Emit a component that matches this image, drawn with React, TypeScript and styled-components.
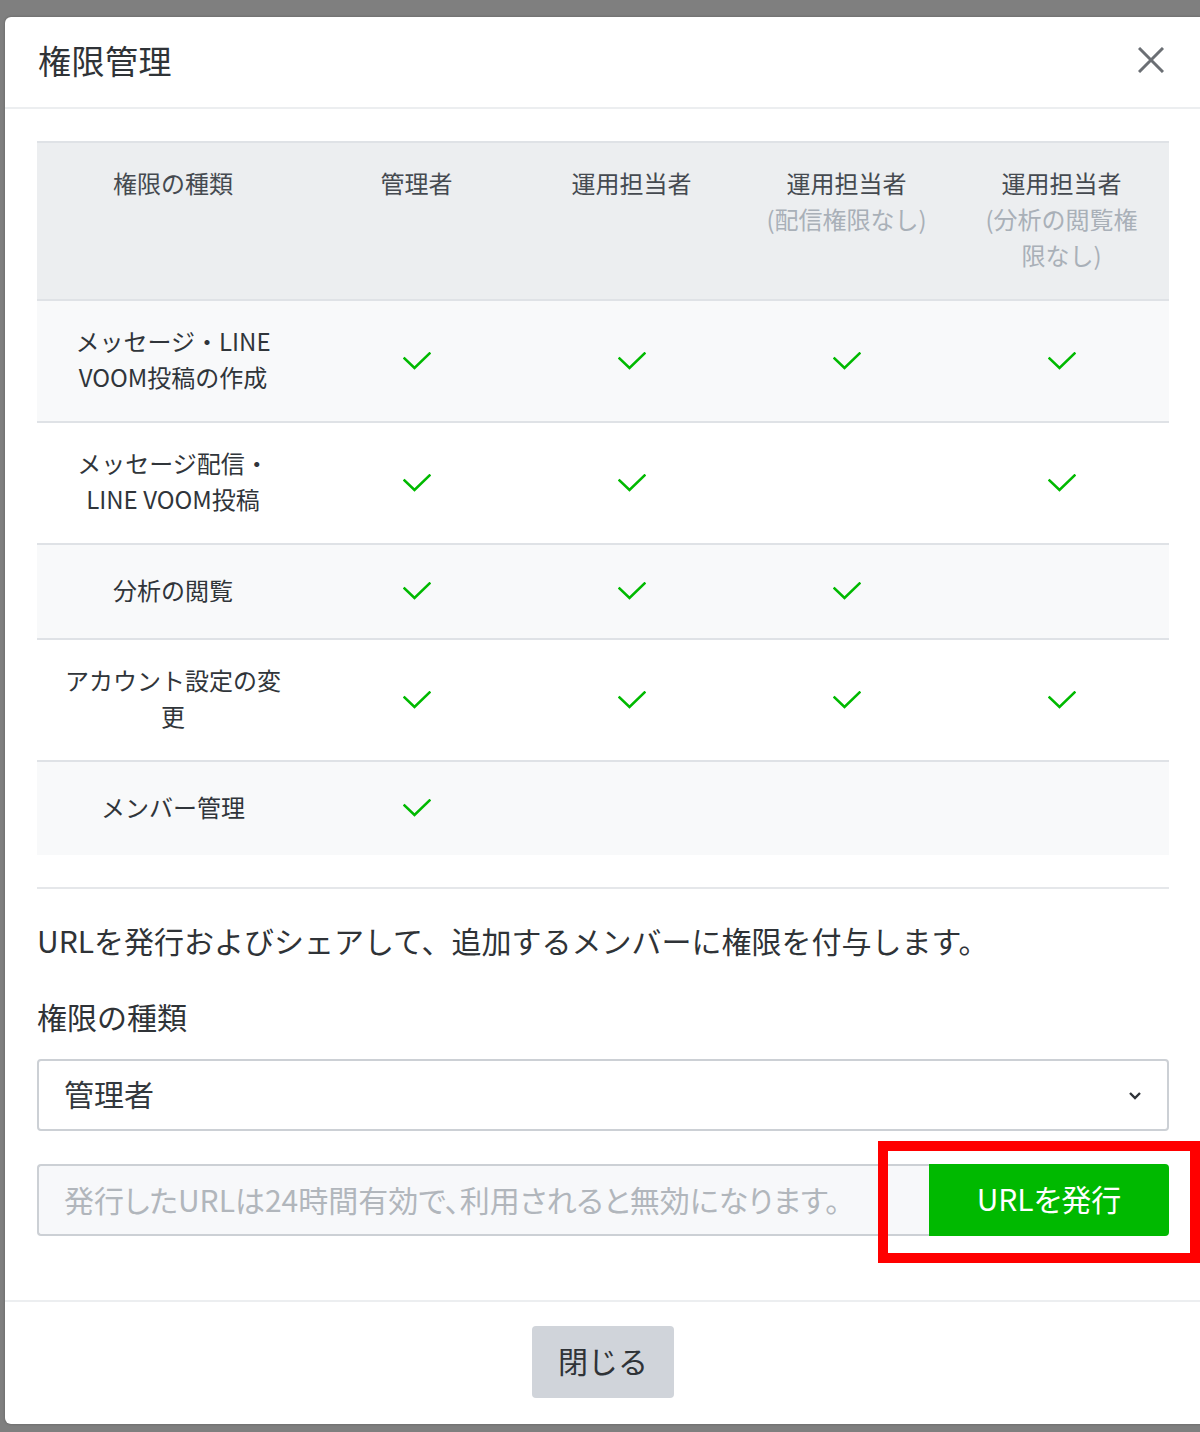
import React from 'react';
import styled, { createGlobalStyle } from 'styled-components';

const GlobalStyle = createGlobalStyle`
  html, body {
    margin: 0;
    padding: 0;
    background: #7f7f7f;
  }
  body {
    font-family: 'Noto Sans CJK JP', 'Noto Sans', sans-serif;
    color: #33383d;
  }
  #root {
    min-height: 1432px;
  }
`;

type Role = 'admin' | 'op' | 'opNoSend' | 'opNoAnalytics';

const columns: { key: Role; title: string; note?: string }[] = [
  { key: 'admin', title: '管理者' },
  { key: 'op', title: '運用担当者' },
  { key: 'opNoSend', title: '運用担当者', note: '(配信権限なし)' },
  { key: 'opNoAnalytics', title: '運用担当者', note: '(分析の閲覧権限なし)' },
];

const rows: { label: string; allowed: Role[] }[] = [
  { label: 'メッセージ・LINE VOOM投稿の作成', allowed: ['admin', 'op', 'opNoSend', 'opNoAnalytics'] },
  { label: 'メッセージ配信・LINE VOOM投稿', allowed: ['admin', 'op', 'opNoAnalytics'] },
  { label: '分析の閲覧', allowed: ['admin', 'op', 'opNoSend'] },
  { label: 'アカウント設定の変更', allowed: ['admin', 'op', 'opNoSend', 'opNoAnalytics'] },
  { label: 'メンバー管理', allowed: ['admin'] },
];

const CheckIcon = () => (
  <svg width="28" height="18" viewBox="0 0 28 18" fill="none">
    <polyline
      points="1.5,6.5 11.5,16 26.5,1.5"
      stroke="#00b900"
      strokeWidth="2.6"
      strokeLinecap="square"
      strokeLinejoin="miter"
    />
  </svg>
);

const CloseIcon = () => (
  <svg width="26" height="26" viewBox="0 0 26 26" fill="none">
    <path d="M1 1L25 25M25 1L1 25" stroke="#6b6f74" strokeWidth="3" />
  </svg>
);

const ChevronIcon = () => (
  <svg width="14" height="9" viewBox="0 0 14 9" fill="none">
    <path d="M2 2L7 7L12 2" stroke="#2f3439" strokeWidth="2.4" />
  </svg>
);

const App: React.FC = () => {
  return (
    <>
      <GlobalStyle />
      <Page>
        <Modal>
          <ModalHeader>
            <Title>権限管理</Title>
            <CloseButton aria-label="close">
              <CloseIcon />
            </CloseButton>
          </ModalHeader>

          <ModalBody>
            <PermissionTable>
              <colgroup>
                <col style={{ width: 272 }} />
                <col />
                <col />
                <col />
                <col />
              </colgroup>
              <thead>
                <tr>
                  <HeadCell>権限の種類</HeadCell>
                  {columns.map(col => (
                    <HeadCell key={col.key}>
                      {col.title}
                      {col.note && <Note>{col.note}</Note>}
                    </HeadCell>
                  ))}
                </tr>
              </thead>
              <tbody>
                {rows.map((row, i) => (
                  <BodyRow key={row.label} striped={i % 2 === 0}>
                    <LabelCell>{row.label}</LabelCell>
                    {columns.map(col => (
                      <CheckCell key={col.key}>{row.allowed.includes(col.key) && <CheckIcon />}</CheckCell>
                    ))}
                  </BodyRow>
                ))}
              </tbody>
            </PermissionTable>

            <Divider />

            <Description>URLを発行およびシェアして、追加するメンバーに権限を付与します。</Description>

            <FieldLabel>権限の種類</FieldLabel>
            <SelectBox>
              <span>管理者</span>
              <ChevronIcon />
            </SelectBox>

            <UrlRow>
              <UrlInput readOnly placeholder="発行したURLは24時間有効で、利用されると無効になります。" />
              <IssueButton>URLを発行</IssueButton>
              <Highlight />
            </UrlRow>
          </ModalBody>

          <ModalFooter>
            <GrayButton>閉じる</GrayButton>
          </ModalFooter>
        </Modal>
      </Page>
    </>
  );
};

export default App;

const Page = styled.div`
  padding: 17px 0 8px 5px;
`;

const Modal = styled.div`
  position: relative;
  width: 1196px;
  background: #fff;
  border-radius: 6px 0 0 6px;
  box-shadow: 0 0 3px rgba(0, 0, 0, 0.25);
`;

const ModalHeader = styled.div`
  display: flex;
  align-items: center;
  justify-content: space-between;
  height: 92px;
  padding: 0 37px 4px 33px;
  border-bottom: 2px solid #eceef0;
  box-sizing: border-box;
`;

const Title = styled.h1`
  margin: 0;
  font-size: 33px;
  font-weight: 400;
  color: #2f3337;
  letter-spacing: 0.5px;
`;

const CloseButton = styled.button`
  display: flex;
  align-items: center;
  justify-content: center;
  padding: 0;
  border: none;
  background: none;
  cursor: pointer;
`;

const ModalBody = styled.div`
  padding: 32px 32px 64px;
`;

const PermissionTable = styled.table`
  width: 100%;
  table-layout: fixed;
  border-collapse: collapse;
  border-top: 2px solid #dfe2e6;
`;

const HeadCell = styled.th`
  padding: 22px 24px 26px;
  background: #eceef0;
  border-bottom: 2px solid #dfe2e6;
  font-size: 24px;
  line-height: 36px;
  font-weight: 400;
  color: #454a50;
  vertical-align: top;
  text-align: center;
  height: 108px;
`;

const Note = styled.div`
  color: #a9b0b8;
`;

const BodyRow = styled.tr<{ striped: boolean }>`
  background: ${({ striped }) => (striped ? '#f8f9fa' : '#fff')};
  border-bottom: 2px solid #dfe2e6;
  &:last-child {
    border-bottom: none;
  }
`;

const LabelCell = styled.td`
  padding: 22px 24px 26px;
  height: 45px;
  font-size: 24px;
  line-height: 36px;
  color: #30353a;
  text-align: center;
  vertical-align: middle;
`;

const CheckCell = styled.td`
  padding: 0;
  line-height: 0;
  text-align: center;
  vertical-align: middle;
  svg {
    display: block;
    margin: 0 auto 1px;
  }
`;

const Divider = styled.hr`
  margin: 32px 0 0;
  border: none;
  border-top: 2px solid #e5e7ea;
`;

const Description = styled.p`
  margin: 31px 0 0;
  font-size: 30px;
  line-height: 40px;
  color: #2f3337;
`;

const FieldLabel = styled.div`
  margin-top: 36px;
  font-size: 30px;
  line-height: 40px;
  color: #2f3337;
`;

const SelectBox = styled.div`
  display: flex;
  align-items: center;
  justify-content: space-between;
  margin-top: 23px;
  height: 72px;
  padding: 0 25px 4px 25px;
  border: 2px solid #ccd0d5;
  border-radius: 4px;
  box-sizing: border-box;
  font-size: 30px;
  color: #33383d;
  svg {
    margin-top: 4px;
  }
`;

const UrlRow = styled.div`
  position: relative;
  display: flex;
  margin-top: 33px;
  height: 72px;
`;

const UrlInput = styled.input`
  flex: 1;
  min-width: 0;
  height: 72px;
  padding: 0 25px 3px;
  border: 2px solid #ccd0d5;
  border-right: none;
  border-radius: 4px 0 0 4px;
  background: #f7f8fa;
  box-sizing: border-box;
  font-family: inherit;
  font-size: 30px;
  font-feature-settings: 'palt';
  outline: none;
  &::placeholder {
    color: #b1b6bc;
  }
`;

const IssueButton = styled.button`
  width: 240px;
  height: 72px;
  padding: 0 0 4px;
  border: none;
  border-radius: 0 4px 4px 0;
  background: #00b900;
  color: #fff;
  font-family: inherit;
  font-size: 30px;
  font-feature-settings: 'palt';
  cursor: pointer;
`;

const Highlight = styled.div`
  position: absolute;
  top: -23px;
  right: -31px;
  width: 322px;
  height: 122px;
  border: 10px solid #ff0000;
  box-sizing: border-box;
  pointer-events: none;
`;

const ModalFooter = styled.div`
  display: flex;
  justify-content: center;
  padding: 24px 0 26px;
  border-top: 2px solid #eceef0;
`;

const GrayButton = styled.button`
  height: 72px;
  padding: 0 26px 4px;
  border: none;
  border-radius: 4px;
  background: #d0d4da;
  color: #2f3337;
  font-family: inherit;
  font-size: 30px;
  cursor: pointer;
`;
